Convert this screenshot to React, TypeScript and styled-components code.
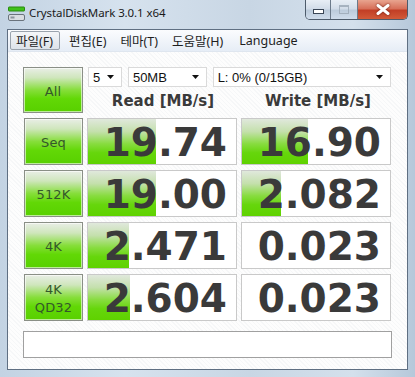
import React from 'react';
import styled, { createGlobalStyle } from 'styled-components';

type Row = {
  label: string[];
  read: string;
  readBar: number;
  write: string;
  writeBar: number;
};

const rows: Row[] = [
  { label: ['Seq'], read: '19.74', readBar: 68, write: '16.90', writeBar: 66 },
  { label: ['512K'], read: '19.00', readBar: 68, write: '2.082', writeBar: 39 },
  { label: ['4K'], read: '2.471', readBar: 41, write: '0.023', writeBar: 0 },
  { label: ['4K', 'QD32'], read: '2.604', readBar: 42, write: '0.023', writeBar: 0 },
];

const menus = ['파일(F)', '편집(E)', '테마(T)', '도움말(H)', 'Language'];

const AppIcon = () => (
  <svg width="17" height="16" viewBox="0 0 17 16">
    <rect x="0.5" y="1" width="16" height="4" rx="0.5" fill="#3fc21a" stroke="#2a8a10" />
    <rect x="0.5" y="8.5" width="16" height="6" rx="1.5" fill="#d9dde2" stroke="#6a737c" />
    <rect x="2.5" y="10.5" width="4" height="2" fill="#8b949c" />
  </svg>
);

const DropArrow = () => (
  <svg width="8" height="4" viewBox="0 0 8 4">
    <path d="M0 0 H7 L3.5 4 Z" fill="#111" />
  </svg>
);

const App = () => {
  return (
    <>
      <GlobalStyle />
      <Window>
        <TitleBar>
          <AppIcon />
          <Title>CrystalDiskMark 3.0.1 x64</Title>
          <Caption>
            <CapButton>
              <MinGlyph />
            </CapButton>
            <CapButton $wide={26}>
              <MaxGlyph />
            </CapButton>
            <CloseButton>
              <svg width="14" height="11" viewBox="0 0 14 11">
                <path
                  d="M2 1.5 L12 9.5 M12 1.5 L2 9.5"
                  stroke="#fff"
                  strokeWidth="3"
                  strokeLinecap="round"
                />
              </svg>
            </CloseButton>
          </Caption>
        </TitleBar>
        <Body>
          <MenuBar>
            {menus.map((m, i) => (
              <MenuItem key={m} $active={i === 0}>
                {m}
              </MenuItem>
            ))}
          </MenuBar>
          <Client>
            <Grid>
              <TestButton>All</TestButton>
              <TopArea>
                <Selects>
                  <Select $w={34}>
                    <span>5</span>
                    <DropArrow />
                  </Select>
                  <Select $w={79}>
                    <span>50MB</span>
                    <DropArrow />
                  </Select>
                  <Select $w={179}>
                    <span>L: 0% (0/15GB)</span>
                    <DropArrow />
                  </Select>
                </Selects>
                <Headers>
                  <Header>Read [MB/s]</Header>
                  <Header>Write [MB/s]</Header>
                </Headers>
              </TopArea>
              {rows.map((r) => (
                <React.Fragment key={r.label.join(' ')}>
                  <TestButton $small={r.label.length > 1}>
                    {r.label.map((l) => (
                      <span key={l}>{l}</span>
                    ))}
                  </TestButton>
                  <Cell>
                    {r.readBar > 0 && <Bar style={{ width: r.readBar }} />}
                    <Value>{r.read}</Value>
                  </Cell>
                  <Cell>
                    {r.writeBar > 0 && <Bar style={{ width: r.writeBar }} />}
                    <Value>{r.write}</Value>
                  </Cell>
                </React.Fragment>
              ))}
            </Grid>
            <Comment />
          </Client>
        </Body>
      </Window>
    </>
  );
};

export default App;

const GlobalStyle = createGlobalStyle`
  body {
    margin: 0;
    background: #c9d7e4;
  }
`;
const Window = styled.div`
  width: 415px;
  height: 377px;
  box-sizing: border-box;
  padding: 0 7px 7px 7px;
  display: flex;
  flex-direction: column;
  background: linear-gradient(90deg, #c3d3e3 0%, #d6e2ee 30%, #c8d6e4 60%, #d4e0ec 85%, #b6c8da 100%);
  font-family: 'Noto Sans', 'Noto Sans CJK KR', sans-serif;
  overflow: hidden;
`;
const TitleBar = styled.div`
  height: 29px;
  display: flex;
  align-items: flex-start;
  padding-left: 1px;
  & > svg {
    margin-top: 6px;
  }
`;
const Title = styled.div`
  margin: 5px 0 0 4px;
  font-size: 11.5px;
  color: #1a1a1a;
  letter-spacing: -0.1px;
`;
const Caption = styled.div`
  margin-left: auto;
  display: flex;
  height: 19px;
  border: 1px solid #4d5b6b;
  border-top: none;
  border-radius: 0 0 5px 5px;
  overflow: hidden;
`;
const CapButton = styled.div<{ $wide?: number }>`
  width: ${(p) => p.$wide ?? 24}px;
  display: flex;
  align-items: center;
  justify-content: center;
  border-right: 1px solid #6c7a8a;
  background: linear-gradient(#e8eef5 0%, #d3dde9 45%, #bccbdb 55%, #cfdceb 100%);
`;
const MinGlyph = styled.div`
  width: 9px;
  height: 3px;
  margin-top: 4px;
  background: #fff;
  border: 1px solid #3a4656;
`;
const MaxGlyph = styled.div`
  width: 8px;
  height: 6px;
  border: 1px solid #9aa6b4;
  border-top-width: 2px;
  opacity: 0.8;
`;
const CloseButton = styled.div`
  width: 49px;
  display: flex;
  align-items: center;
  justify-content: center;
  background: linear-gradient(#e8a48f 0%, #d7705a 45%, #c23f26 55%, #d25a38 100%);
  svg {
    filter: drop-shadow(0 0 1px #6b1a0c);
  }
`;
const Body = styled.div`
  flex: 1;
  display: flex;
  flex-direction: column;
  border: 1px solid #5f6f82;
  background: #fbfcfd;
`;
const MenuBar = styled.div`
  height: 21px;
  display: flex;
  align-items: center;
  gap: 1px;
  padding: 0 2px;
  background: linear-gradient(#fbfcfe, #e6edf6);
  border-bottom: 1px solid #dfe6ef;
`;
const MenuItem = styled.div<{ $active?: boolean }>`
  height: 17px;
  padding: 0 6px 0 5px;
  display: flex;
  align-items: center;
  font-size: 12.5px;
  color: #1e1e1e;
  border: 1px solid ${(p) => (p.$active ? '#9aa3ad' : 'transparent')};
  border-radius: 2px;
  background: ${(p) => (p.$active ? 'linear-gradient(#f4f6f8, #dde3ea)' : 'none')};
  &:nth-child(2) { margin-left: 2px; }
  &:last-child { margin-left: 2px; }
`;
const Client = styled.div`
  flex: 1;
  padding: 15px 15px 11px 15px;
  display: flex;
  flex-direction: column;
  gap: 10px;
  background: repeating-linear-gradient(45deg, #fdfdfd 0 2px, #f6f7f8 2px 3px);
`;
const Grid = styled.div`
  display: grid;
  grid-template-columns: 60px 150px 150px;
  grid-template-rows: 46px repeat(4, 47px);
  column-gap: 4px;
  row-gap: 5px;
  & > :nth-child(3n) { margin-left: 1px; }
`;
const TestButton = styled.div<{ $small?: boolean }>`
  box-sizing: border-box;
  border: 1px solid #8a8f86;
  box-shadow: inset 0 0 0 1px rgba(255, 255, 255, 0.6);
  background: linear-gradient(#e9eee6 0%, #cfe6bc 22%, #86de3a 50%, #62d806 70%, #58d000 100%);
  display: flex;
  flex-direction: column;
  align-items: center;
  justify-content: center;
  padding-top: ${(p) => (p.$small ? 2 : 3)}px;
  font-family: 'DejaVu Sans', Verdana, sans-serif;
  font-size: 13px;
  line-height: ${(p) => (p.$small ? 18 : 16)}px;
  color: #34582a;
  letter-spacing: 0.2px;
`;
const TopArea = styled.div`
  grid-column: 2 / 4;
  display: flex;
  flex-direction: column;
`;
const Selects = styled.div`
  display: flex;
  gap: 6px;
  padding-left: 1px;
`;
const Select = styled.div<{ $w: number }>`
  width: ${(p) => p.$w}px;
  height: 20px;
  box-sizing: border-box;
  display: flex;
  align-items: center;
  justify-content: space-between;
  padding: 0 6px 0 4px;
  border: 1px solid #dadada;
  background: #fff;
  font-family: 'Liberation Sans', Arial, sans-serif;
  font-size: 13px;
  color: #111;
`;
const Headers = styled.div`
  flex: 1;
  display: grid;
  grid-template-columns: 150px 150px;
  column-gap: 5px;
  align-items: center;
  padding-top: 2px;
`;
const Header = styled.div`
  text-align: center;
  font-family: 'DejaVu Sans', Verdana, sans-serif;
  font-weight: bold;
  font-size: 15px;
  color: #3a3a3a;
  padding-left: 2px;
`;
const Cell = styled.div`
  position: relative;
  box-sizing: border-box;
  border: 1px solid #c9c9c9;
  background: #fff;
  display: flex;
  align-items: center;
  justify-content: flex-end;
  padding-right: 9px;
  overflow: hidden;
`;
const Bar = styled.div`
  position: absolute;
  left: 0;
  top: 0;
  bottom: 0;
  background: linear-gradient(#e0e8dc 0%, #c4e0ac 28%, #88dc40 55%, #66d60c 75%, #5fd200 100%);
`;
const Value = styled.div`
  position: relative;
  font-family: 'DejaVu Sans', Verdana, sans-serif;
  font-weight: bold;
  font-size: 39px;
  line-height: 1;
  color: #3a3a3a;
  margin-top: 2px;
`;
const Comment = styled.div`
  height: 27px;
  box-sizing: border-box;
  border: 1px solid #a0a0a0;
  background: #fff;
`;
